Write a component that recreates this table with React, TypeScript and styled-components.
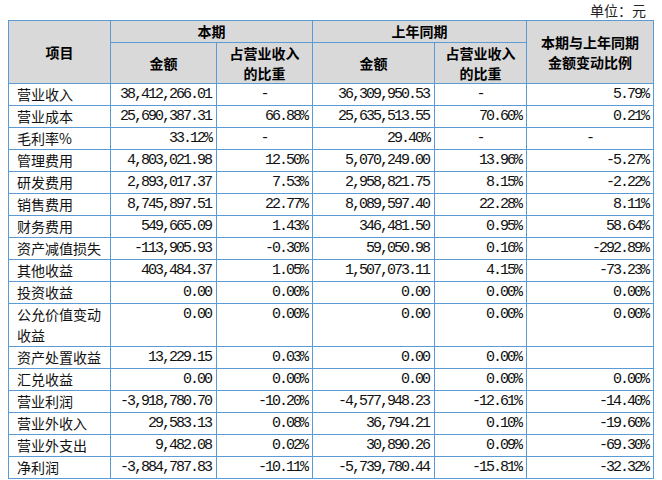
import React from "react";
import styled, { createGlobalStyle } from "styled-components";

const Global = createGlobalStyle`
  html, body { margin: 0; padding: 0; background: #fff; }
  body { font-family: "Noto Sans CJK SC", "Liberation Serif", serif; color: #000; }
`;

const Page = styled.div`
  width: 645px;
  padding-left: 8px;
`;

const Unit = styled.div`
  height: 20px;
  line-height: 20px;
  text-align: right;
  padding-right: 7px;
  font-size: 14px;
  color: #222;
  font-family: "Noto Sans CJK SC", sans-serif;
`;

const Table = styled.table`
  width: 645px;
  border-collapse: collapse;
  table-layout: fixed;
`;

const HeadRow = styled.tr<{ $h: number }>`
  height: ${(p) => p.$h}px;
`;

const Th = styled.th`
  background: #d9d9d9;
  border: 1px solid #5b9bd5;
  font-family: "Noto Sans CJK SC", sans-serif;
  font-weight: 700;
  font-size: 14px;
  line-height: 20px;
  text-align: center;
  vertical-align: middle;
  padding: 0 4px;
  color: #000;
`;

const Row = styled.tr<{ $h: number }>`
  height: ${(p) => p.$h}px;
`;

const Label = styled.td`
  border: 1px solid #5b9bd5;
  font-family: "Noto Sans CJK SC", sans-serif;
  font-size: 14px;
  line-height: 21px;
  padding: 0 7px 0 8px;
  vertical-align: top;
  color: #111;
`;

const Num = styled.td<{ $center?: boolean }>`
  border: 1px solid #5b9bd5;
  font-family: "Liberation Mono", monospace;
  font-size: 15px;
  letter-spacing: -2px;
  line-height: 21px;
  padding: 0 5px 0 4px;
  vertical-align: top;
  text-align: ${(p) => (p.$center ? "center" : "right")};
  white-space: nowrap;
  color: #111;
`;

type R = [string, string, string, string, string, string];

const rows: R[] = [
  ["营业收入", "38,412,266.01", "-", "36,309,950.53", "-", "5.79%"],
  ["营业成本", "25,690,387.31", "66.88%", "25,635,513.55", "70.60%", "0.21%"],
  ["毛利率%", "33.12%", "-", "29.40%", "-", "-"],
  ["管理费用", "4,803,021.98", "12.50%", "5,070,249.00", "13.96%", "-5.27%"],
  ["研发费用", "2,893,017.37", "7.53%", "2,958,821.75", "8.15%", "-2.22%"],
  ["销售费用", "8,745,897.51", "22.77%", "8,089,597.40", "22.28%", "8.11%"],
  ["财务费用", "549,665.09", "1.43%", "346,481.50", "0.95%", "58.64%"],
  ["资产减值损失", "-113,905.93", "-0.30%", "59,050.98", "0.16%", "-292.89%"],
  ["其他收益", "403,484.37", "1.05%", "1,507,073.11", "4.15%", "-73.23%"],
  ["投资收益", "0.00", "0.00%", "0.00", "0.00%", "0.00%"],
  ["公允价值变动收益", "0.00", "0.00%", "0.00", "0.00%", "0.00%"],
  ["资产处置收益", "13,229.15", "0.03%", "0.00", "0.00%", ""],
  ["汇兑收益", "0.00", "0.00%", "0.00", "0.00%", "0.00%"],
  ["营业利润", "-3,918,780.70", "-10.20%", "-4,577,948.23", "-12.61%", "-14.40%"],
  ["营业外收入", "29,583.13", "0.08%", "36,794.21", "0.10%", "-19.60%"],
  ["营业外支出", "9,482.08", "0.02%", "30,890.26", "0.09%", "-69.30%"],
  ["净利润", "-3,884,787.83", "-10.11%", "-5,739,780.44", "-15.81%", "-32.32%"],
];

const UNIT = 21.44;

export default function App() {
  return (
    <Page>
      <Global />
      <Unit>单位：元</Unit>
      <Table>
        <colgroup>
          <col style={{ width: 102 }} />
          <col style={{ width: 106 }} />
          <col style={{ width: 96 }} />
          <col style={{ width: 122 }} />
          <col style={{ width: 92 }} />
          <col style={{ width: 127 }} />
        </colgroup>
        <thead>
          <HeadRow $h={21.5}>
            <Th rowSpan={2}>项目</Th>
            <Th colSpan={2}>本期</Th>
            <Th colSpan={2}>上年同期</Th>
            <Th rowSpan={2}>
              本期与上年同期
              <br />
              金额变动比例
            </Th>
          </HeadRow>
          <HeadRow $h={41.8}>
            <Th>金额</Th>
            <Th>
              占营业收入
              <br />
              的比重
            </Th>
            <Th>金额</Th>
            <Th>
              占营业收入
              <br />
              的比重
            </Th>
          </HeadRow>
        </thead>
        <tbody>
          {rows.map((r) => (
            <Row key={r[0]} $h={r[0].length > 6 ? UNIT * 2 : UNIT}>
              <Label>{r[0]}</Label>
              {r.slice(1).map((v, i) => (
                <Num key={i} $center={v === "-"}>
                  {v}
                </Num>
              ))}
            </Row>
          ))}
        </tbody>
      </Table>
    </Page>
  );
}
